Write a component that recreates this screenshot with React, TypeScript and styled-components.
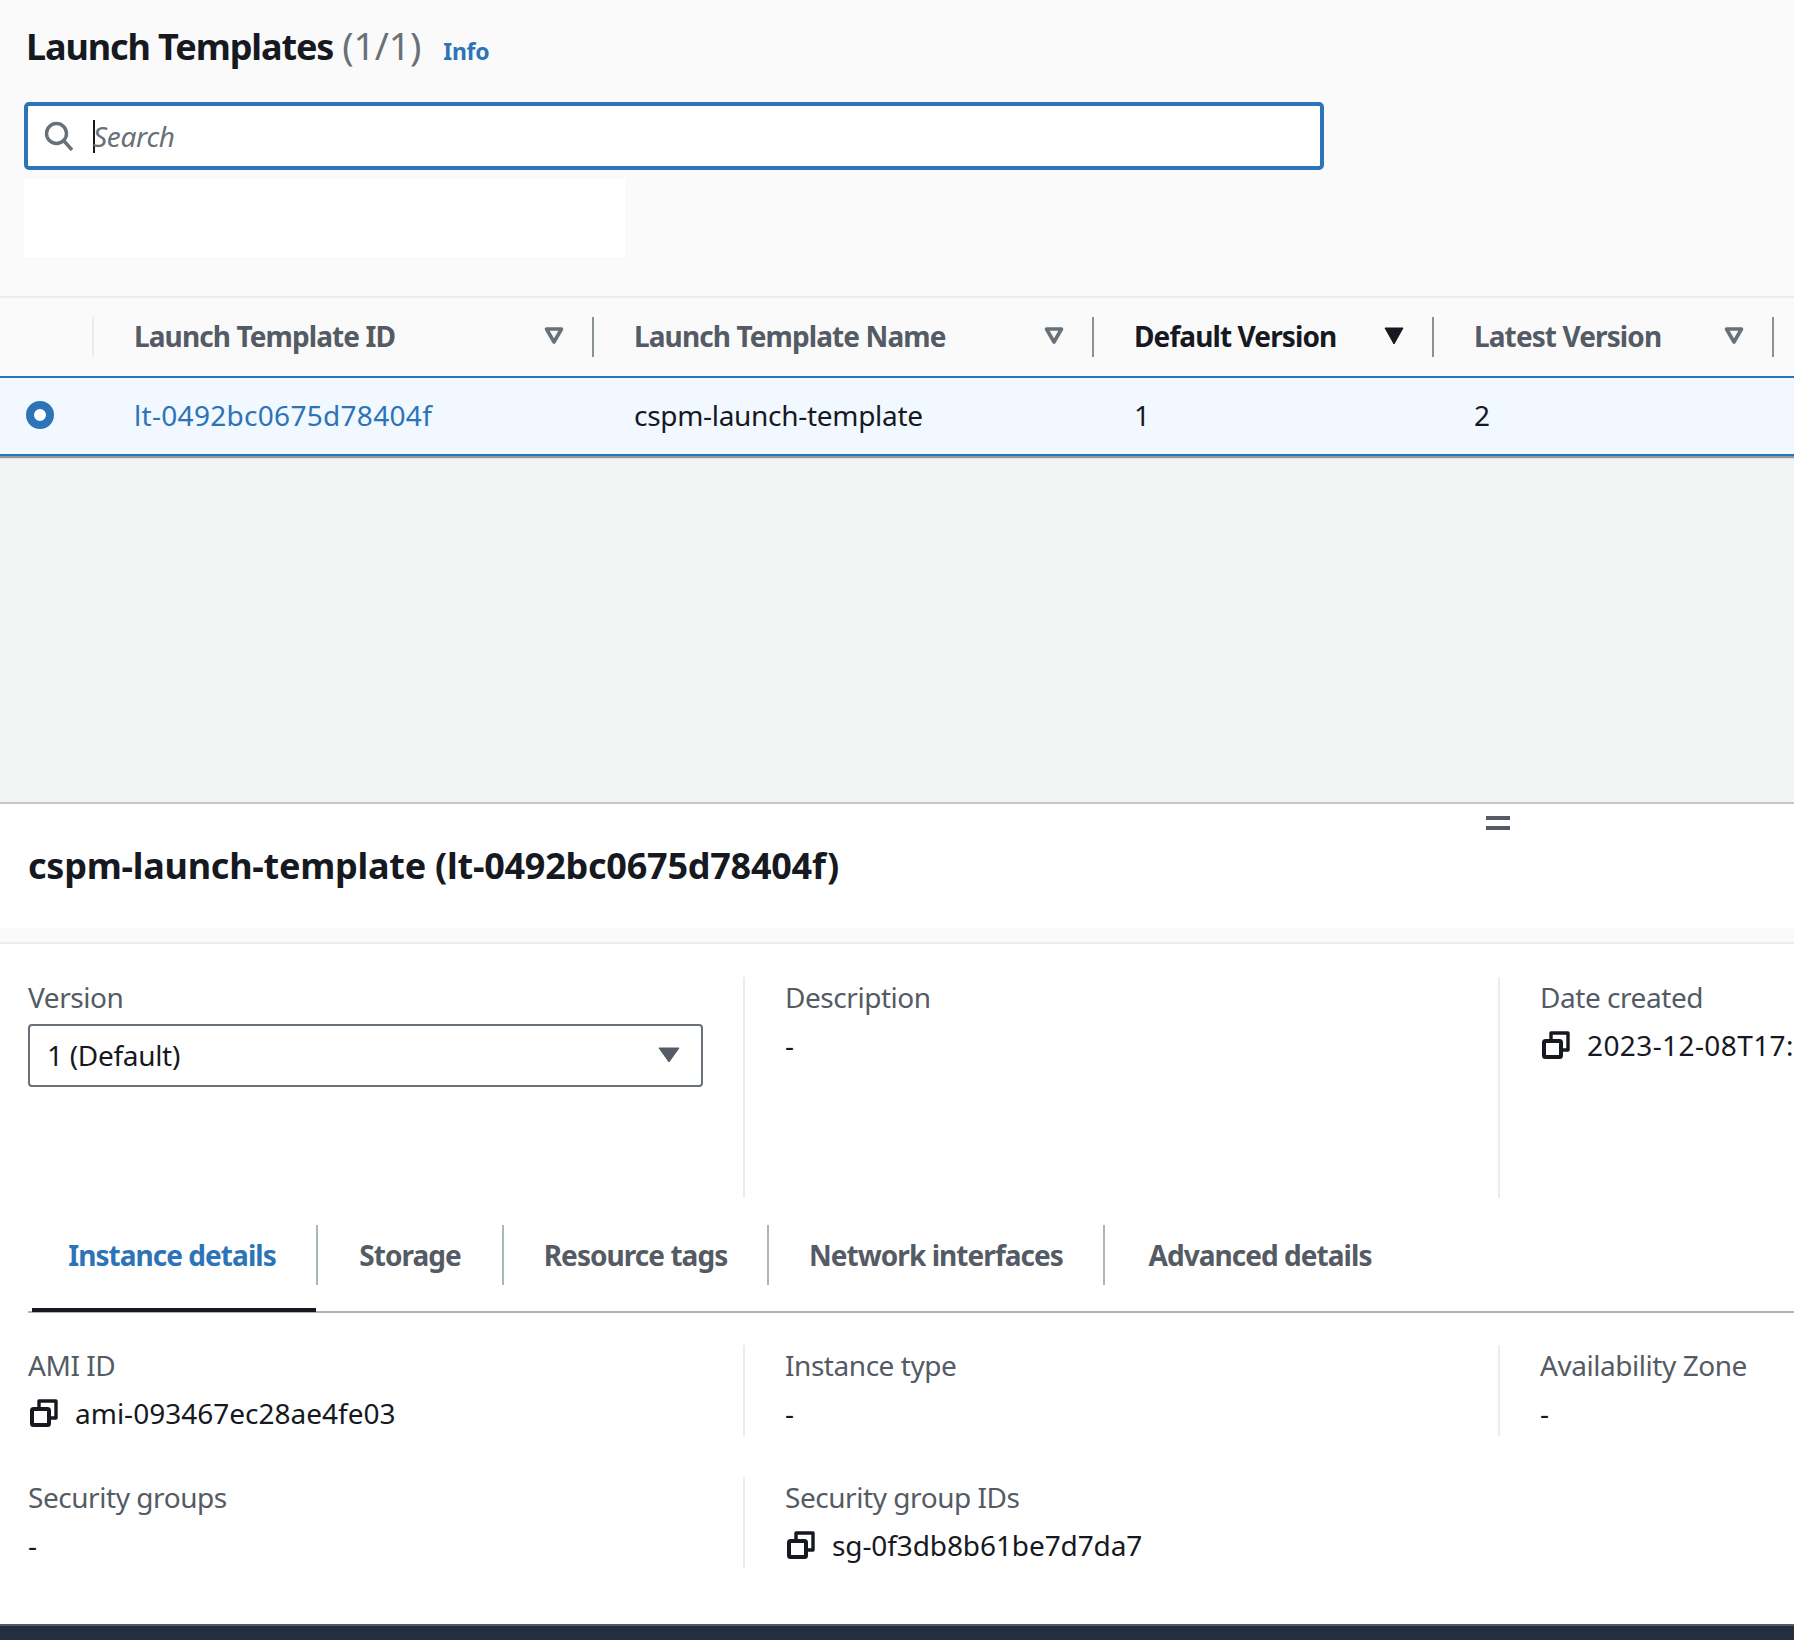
import styled, { createGlobalStyle } from 'styled-components'

const GlobalStyle = createGlobalStyle`
  html, body {
    margin: 0;
    padding: 0;
    background: #ffffff;
    font-family: "Noto Sans", "Liberation Sans", sans-serif;
    color: #16191f;
  }
  * { box-sizing: border-box; }
`

const Page = styled.div`
  width: 1794px;
  height: 1640px;
  overflow: hidden;
  display: flex;
  flex-direction: column;
  font-size: 28px;
  letter-spacing: -0.3px;
`

const TopSection = styled.section`
  height: 296px;
  background: #fafafa;
  padding: 19px 0 0 24px;
`

const TitleRow = styled.div`
  display: flex;
  align-items: baseline;
  height: 57px;
  padding-left: 2px;
`

const Title = styled.h1`
  margin: 0;
  font-size: 36px;
  line-height: 44px;
  font-weight: 700;
  letter-spacing: -1.1px;
`

const Count = styled.span`
  margin-left: 9px;
  font-size: 38px;
  font-weight: 400;
  color: #687078;
`

const InfoLink = styled.a`
  margin-left: 22px;
  font-size: 23px;
  font-weight: 700;
  color: #2d73b8;
`

const SearchBox = styled.div`
  margin-top: 26px;
  width: 1300px;
  height: 68px;
  border: 4px solid #2d73b8;
  border-radius: 5px;
  background: #fff;
  display: flex;
  align-items: center;
  padding-left: 16px;
`

const Caret = styled.span`
  width: 2px;
  height: 33px;
  margin-left: 19px;
  background: #16191f;
`

const Placeholder = styled.span`
  margin-left: -2px;
  font-style: italic;
  color: #687078;
  font-size: 28px;
`

const MaskBlock = styled.div`
  margin-top: 9px;
  width: 601px;
  height: 78px;
  background: #fff;
`

const TableHead = styled.div`
  height: 80px;
  display: grid;
  grid-template-columns: 92px 500px 500px 340px 340px 1fr;
  align-items: center;
  background: #fafafa;
  border-top: 2px solid #eaeded;
`

const HeadCell = styled.div<{ $active?: boolean; $first?: boolean }>`
  height: 40px;
  display: flex;
  align-items: center;
  justify-content: space-between;
  padding: 0 28px 2px 40px;
  border-left: 2px solid ${(p) => (p.$first ? '#eaeded' : '#879196')};
  font-weight: 700;
  font-size: 28px;
  letter-spacing: -0.9px;
  color: ${(p) => (p.$active ? '#16191f' : '#545b64')};
`

const SelectedRow = styled.div`
  position: relative;
  z-index: 1;
  height: 80px;
  padding-bottom: 2px;
  display: grid;
  grid-template-columns: 93px 500px 500px 340px 340px 1fr;
  align-items: center;
  background: #f1f8ff;
  border-top: 2px solid #2d73b8;
  border-bottom: 2px solid #2d73b8;
  box-shadow: 0 2px 1px rgba(84, 91, 100, 0.6);
`

const RadioCell = styled.div`
  padding-left: 26px;
  display: flex;
`

const Radio = styled.span`
  width: 28px;
  height: 28px;
  border-radius: 50%;
  border: 8px solid #2d73b8;
  background: #fff;
`

const BodyCell = styled.div`
  padding-left: 41px;
  font-size: 28px;
`

const IdLink = styled.a`
  color: #2d73b8;
  letter-spacing: 0.3px;
`

const EmptyArea = styled.div`
  flex: 1;
  background: #f2f3f3;
`

const SplitPanel = styled.section`
  position: relative;
  height: 838px;
  flex: none;
  background: #fff;
  border-top: 2px solid #c4c8cc;
  display: flex;
  flex-direction: column;
`

const DragHandle = styled.div`
  position: absolute;
  top: 12px;
  left: 1486px;
  width: 24px;
  height: 14px;
  border-top: 4px solid #545b64;
  border-bottom: 4px solid #545b64;
`

const PanelHeader = styled.div`
  height: 124px;
  display: flex;
  align-items: center;
  padding: 0 28px 2px;
`

const PanelTitle = styled.h2`
  margin: 0;
  font-size: 36px;
  font-weight: 700;
  letter-spacing: -0.25px;
`

const Band = styled.div`
  height: 16px;
  background: #fafafa;
  border-bottom: 2px solid #eaeded;
`

const SummaryGrid = styled.div`
  margin-top: 33px;
  height: 221px;
  display: grid;
  grid-template-columns: 743px 755px 1fr;
`

const DetailRow = styled.div<{ $top: number }>`
  margin-top: ${(p) => p.$top}px;
  height: 91px;
  display: grid;
  grid-template-columns: 743px 755px 1fr;
`

const Column = styled.div<{ $divided?: boolean }>`
  padding-top: 1px;
  padding-left: ${(p) => (p.$divided ? '40px' : '28px')};
  border-left: ${(p) => (p.$divided ? '2px solid #eaeded' : 'none')};
  overflow: hidden;
`

const Label = styled.div`
  font-size: 28px;
  line-height: 38px;
  letter-spacing: -0.45px;
  color: #545b64;
`

const Value = styled.div<{ $spacing?: number }>`
  margin-top: 10px;
  display: flex;
  align-items: center;
  gap: 17px;
  font-size: 28px;
  line-height: 38px;
  letter-spacing: ${(p) => p.$spacing ?? 0}px;
  white-space: nowrap;
`

const VersionSelect = styled.div`
  margin-top: 8px;
  width: 675px;
  height: 63px;
  padding: 0 21px 2px 17px;
  border: 2px solid #687078;
  border-radius: 4px;
  display: flex;
  align-items: center;
  justify-content: space-between;
`

const Tabs = styled.nav`
  margin: 24px 0 0 28px;
  height: 91px;
  display: flex;
  align-items: flex-start;
  border-bottom: 2px solid #aab7b8;
`

const Tab = styled.div<{ $active?: boolean; $width: number }>`
  position: relative;
  width: ${(p) => p.$width}px;
  height: 60px;
  margin-top: 3px;
  display: flex;
  align-items: center;
  justify-content: center;
  font-size: 28px;
  font-weight: 700;
  letter-spacing: -0.95px;
  white-space: nowrap;
  color: ${(p) => (p.$active ? '#2d73b8' : '#545b64')};
  border-right: 2px solid #aab7b8;

  &:last-child {
    border-right: none;
  }

  ${(p) =>
    p.$active
      ? `&::after {
    content: '';
    position: absolute;
    left: 4px;
    right: 0;
    top: 83px;
    height: 4px;
    background: #16191f;
  }`
      : ''}
`

const Footer = styled.footer`
  height: 16px;
  margin-top: auto;
  flex: none;
  background: #232f3e;
  border-top: 2px solid #545b64;
`

const CopySvg = styled.svg`
  flex: none;
  margin-left: 2px;
`

const SearchSvg = styled.svg`
  flex: none;
`

function SortIcon({ active }: { active?: boolean }) {
  return (
    <svg width="20" height="18" viewBox="0 0 20 18">
      {active ? (
        <path d="M1 1 H19 L10 17 Z" fill="#16191f" stroke="#16191f" strokeLinejoin="round" />
      ) : (
        <path d="M2.5 2 H17.5 L10 15 Z" fill="none" stroke="#687078" strokeWidth="3.6" strokeLinejoin="round" />
      )}
    </svg>
  )
}

function CopyIcon() {
  return (
    <CopySvg width="28" height="28" viewBox="0 0 28 28" fill="none" stroke="#16191f" strokeWidth="4" strokeLinejoin="round">
      <rect x="2" y="10" width="17" height="16" rx="1.5" />
      <path d="M9 9 V2 H26 V19 H19" strokeWidth="3.4" />
    </CopySvg>
  )
}

function SearchIcon() {
  return (
    <SearchSvg width="30" height="30" viewBox="0 0 30 30" fill="none" stroke="#687078" strokeWidth="3.4">
      <circle cx="12.5" cy="12.5" r="10" />
      <path d="M20 20 L28 29" />
    </SearchSvg>
  )
}

function App() {
  return (
    <>
      <GlobalStyle />
      <Page>
        <TopSection>
          <TitleRow>
            <Title>Launch Templates</Title>
            <Count>(1/1)</Count>
            <InfoLink>Info</InfoLink>
          </TitleRow>
          <SearchBox>
            <SearchIcon />
            <Caret />
            <Placeholder>Search</Placeholder>
          </SearchBox>
          <MaskBlock />
        </TopSection>

        <TableHead>
          <div />
          <HeadCell $first>
            Launch Template ID
            <SortIcon />
          </HeadCell>
          <HeadCell>
            Launch Template Name
            <SortIcon />
          </HeadCell>
          <HeadCell $active>
            Default Version
            <SortIcon active />
          </HeadCell>
          <HeadCell>
            Latest Version
            <SortIcon />
          </HeadCell>
          <HeadCell />
        </TableHead>

        <SelectedRow>
          <RadioCell>
            <Radio />
          </RadioCell>
          <BodyCell>
            <IdLink>lt-0492bc0675d78404f</IdLink>
          </BodyCell>
          <BodyCell>cspm-launch-template</BodyCell>
          <BodyCell>1</BodyCell>
          <BodyCell>2</BodyCell>
        </SelectedRow>

        <EmptyArea />

        <SplitPanel>
          <DragHandle />
          <PanelHeader>
            <PanelTitle>cspm-launch-template (lt-0492bc0675d78404f)</PanelTitle>
          </PanelHeader>
          <Band />

          <SummaryGrid>
            <Column>
              <Label>Version</Label>
              <VersionSelect>
                1 (Default)
                <svg width="22" height="16" viewBox="0 0 22 16">
                  <path d="M1 1 H21 L11 15 Z" fill="#545b64" stroke="#545b64" strokeLinejoin="round" />
                </svg>
              </VersionSelect>
            </Column>
            <Column $divided>
              <Label>Description</Label>
              <Value>-</Value>
            </Column>
            <Column $divided>
              <Label>Date created</Label>
              <Value $spacing={0.4}>
                <CopyIcon />
                2023-12-08T17:
              </Value>
            </Column>
          </SummaryGrid>

          <Tabs>
            <Tab $active $width={290}>Instance details</Tab>
            <Tab $width={186}>Storage</Tab>
            <Tab $width={265}>Resource tags</Tab>
            <Tab $width={336}>Network interfaces</Tab>
            <Tab $width={310}>Advanced details</Tab>
          </Tabs>

          <DetailRow $top={32}>
            <Column>
              <Label>AMI ID</Label>
              <Value>
                <CopyIcon />
                ami-093467ec28ae4fe03
              </Value>
            </Column>
            <Column $divided>
              <Label>Instance type</Label>
              <Value>-</Value>
            </Column>
            <Column $divided>
              <Label>Availability Zone</Label>
              <Value>-</Value>
            </Column>
          </DetailRow>

          <DetailRow $top={41}>
            <Column>
              <Label>Security groups</Label>
              <Value>-</Value>
            </Column>
            <Column $divided>
              <Label>Security group IDs</Label>
              <Value $spacing={-0.1}>
                <CopyIcon />
                sg-0f3db8b61be7d7da7
              </Value>
            </Column>
            <div />
          </DetailRow>

          <Footer />
        </SplitPanel>
      </Page>
    </>
  )
}

export default App
